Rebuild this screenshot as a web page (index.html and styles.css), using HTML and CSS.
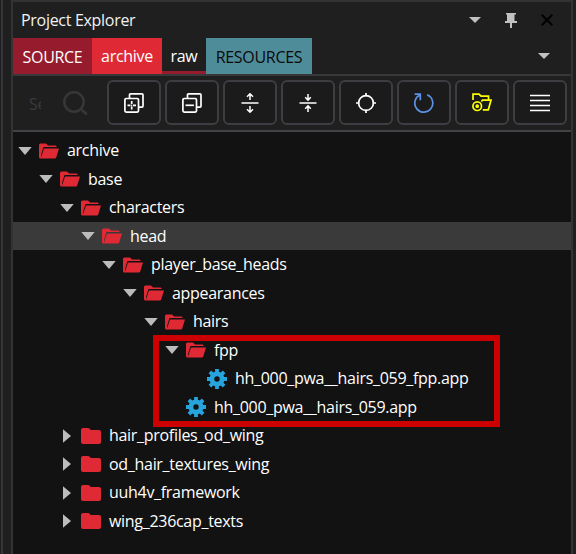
FILE: index.html
```html
<!DOCTYPE html>
<html lang="en">
<head>
<meta charset="utf-8">
<title>Project Explorer</title>
<link rel="stylesheet" href="styles.css">
</head>
<body>
<svg class="defs" width="0" height="0">
  <symbol id="down" viewBox="0 0 14 8"><path d="M.3 0h13.4L7 8z"/></symbol>
  <symbol id="right" viewBox="0 0 8 14"><path d="M0 .2v13.6L8 7z"/></symbol>
  <symbol id="open" viewBox="0 0 20 16"><path d="M0 14V2Q0 .5 1.5.5H7L9 2.5h7.5q1 0 1.2 1.5H4.5L2 12V14.5L5 5.5h15L17.3 14.3Q17 15.5 15.7 15.5H1.5Q0 15.5 0 14z"/></symbol>
  <symbol id="folder" viewBox="0 0 20 16"><path d="M0 2Q0 0 2 0H7.5L10 2H18Q20 2 20 4V14Q20 16 18 16H2Q0 16 0 14z"/></symbol>
  <symbol id="gear" viewBox="0 0 20 20"><circle cx="10" cy="10" r="5.1" fill="none" stroke="currentColor" stroke-width="4.8"/><path d="M10 0v4M10 16v4M0 10h4M16 10h4M2.9 2.9l3 3M14.1 14.1l3 3M2.9 17.1l3-3M14.1 5.9l3-3" fill="none" stroke="currentColor" stroke-width="3.8"/></symbol>
</svg>
<div class="window">
  <section class="panel">
    <header class="title"><h1>Project Explorer</h1>
      <svg class="menu" width="12" height="6"><path d="M0 0h12L6 6z"/></svg>
      <svg class="pin" width="12" height="15"><path d="M1 0h10v1.5H9.5V8H12v2H7v5H5v-5H0V8h2V1.5H1z"/></svg>
      <svg class="close" width="12" height="12"><path d="M.7.7l10.6 10.6M11.3.7L.7 11.3"/></svg>
    </header>
    <nav class="tabs">
      <span class="tab source">SOURCE</span><span class="tab active">archive</span><span class="tab raw">raw</span><span class="tab resources">RESOURCES</span>
      <svg class="more" width="12" height="6"><path d="M0 0h12L6 6z"/></svg>
    </nav>
    <div class="toolbar">
      <div class="search"><span>Search</span><svg width="25" height="25"><circle cx="11" cy="11" r="9.7" stroke-width="2.5"/><path d="M19.5 19.5l3.3 3" stroke-width="3" stroke-linecap="round"/></svg></div>
      <button><svg width="20" height="20"><path d="M5.5 5V2Q5.5.9 6.6.9H18Q19 .9 19 2v11q0 1.1-1 1.1h-3"/><rect x=".9" y="5.5" width="13.6" height="13.6" rx="1.3"/><path d="M3.5 12.3h3M9 12.3h3M7.7 8v3M7.7 13.5v3M7.2 12.3h1"/></svg></button>
      <button><svg width="20" height="20"><path d="M5.5 5V2Q5.5.9 6.6.9H18Q19 .9 19 2v11q0 1.1-1 1.1h-3"/><rect x=".9" y="5.5" width="13.6" height="13.6" rx="1.3"/><path d="M3.5 12.3h8.4"/></svg></button>
      <button><svg class="thin" width="20" height="20"><path d="M1.5 10h17M10 7V1M7 3.7L10 .8l3 2.9M10 13v6M7 16.3l3 2.9 3-2.9"/></svg></button>
      <button><svg class="thin" width="20" height="20"><path d="M1.5 10h17M10 1v6M7.2 4.3L10 7.1l2.8-2.8M10 19v-6M7.2 15.7l2.8-2.8 2.8 2.8"/></svg></button>
      <button><svg width="20" height="20"><circle cx="10" cy="10" r="7.4"/><path d="M10 0v3.3M10 16.7V20M0 10h3.3M16.7 10H20"/></svg></button>
      <button class="refresh"><svg width="20" height="20"><path d="M13.2 1.8A9 9 0 1 1 5.5 2.2M.6 1.2h5.7v6"/></svg></button>
      <button class="locate"><svg width="20" height="20"><path d="M1 7V1.2h6L9 3.2h7.5v3M10 7.2h9L16.3 16.8h-5.5M10.3 7.2l-.8 1.5"/><circle cx="5.2" cy="13.2" r="4.3"/><circle cx="5.2" cy="13.2" r="1" /></svg></button>
      <button><svg width="20" height="20"><path d="M0 2.5h20M0 7.5h20M0 12.5h20M0 17.5h20"/></svg></button>
    </div>
    <ul class="tree">
      <li><svg class="arrow"><use href="#down"/></svg><svg class="icon"><use href="#open"/></svg><span>archive</span></li>
      <li class="l1"><svg class="arrow"><use href="#down"/></svg><svg class="icon"><use href="#open"/></svg><span>base</span></li>
      <li class="l2"><svg class="arrow"><use href="#down"/></svg><svg class="icon"><use href="#open"/></svg><span>characters</span></li>
      <li class="l3 selected"><svg class="arrow"><use href="#down"/></svg><svg class="icon"><use href="#open"/></svg><span>head</span></li>
      <li class="l4"><svg class="arrow"><use href="#down"/></svg><svg class="icon"><use href="#open"/></svg><span>player_base_heads</span></li>
      <li class="l5"><svg class="arrow"><use href="#down"/></svg><svg class="icon"><use href="#open"/></svg><span>appearances</span></li>
      <li class="l6"><svg class="arrow"><use href="#down"/></svg><svg class="icon"><use href="#open"/></svg><span>hairs</span></li>
      <li class="l7"><svg class="arrow"><use href="#down"/></svg><svg class="icon"><use href="#open"/></svg><span>fpp</span></li>
      <li class="l8"><i class="arrow"></i><svg class="icon gear"><use href="#gear"/></svg><span>hh_000_pwa__hairs_059_fpp.app</span></li>
      <li class="l7"><i class="arrow"></i><svg class="icon gear"><use href="#gear"/></svg><span>hh_000_pwa__hairs_059.app</span></li>
      <li class="l2"><svg class="arrow"><use href="#right"/></svg><svg class="icon"><use href="#folder"/></svg><span>hair_profiles_od_wing</span></li>
      <li class="l2"><svg class="arrow"><use href="#right"/></svg><svg class="icon"><use href="#folder"/></svg><span>od_hair_textures_wing</span></li>
      <li class="l2"><svg class="arrow"><use href="#right"/></svg><svg class="icon"><use href="#folder"/></svg><span>uuh4v_framework</span></li>
      <li class="l2"><svg class="arrow"><use href="#right"/></svg><svg class="icon"><use href="#folder"/></svg><span>wing_236cap_texts</span></li>
    </ul>
    <div class="highlight"></div>
  </section>
</div>
</body>
</html>
```
FILE: styles.css
```css
* { box-sizing: border-box; }
body { margin: 0; background: #1f1f1f; color: #fff; font: 16px/20px "Open Sans", "Noto Sans", sans-serif; letter-spacing: -.3px; }
svg { display: block; flex: none; }
.defs { position: absolute; }
.window { height: 554px; margin-left: 1px; padding: 0 3px 0 8px; border-left: 2px solid #35353a; overflow: hidden; }
.panel { position: relative; height: 554px; border: 2px solid #333; border-bottom: 0; background: #1f1f1f; display: flex; flex-direction: column; }
.title { height: 36px; display: flex; align-items: center; padding: 0 18px 0 8px; }
.title h1 { flex: 1; margin: 0; font-size: 16px; font-weight: 400; color: #f1f1f1; }
.title svg, .more { fill: #c1c1c1; }
.menu { margin-right: 24px; }
.pin { margin-right: 24px; }
.title .close { fill: none; stroke: #000; stroke-width: 2; }
.tabs { height: 38px; display: flex; border-bottom: 2px solid #38383a; }
.tab { padding-top: 8px; text-align: center; }
.source { width: 79px; padding-top: 9px; background: #961c2d; }
.active { width: 70px; background: #df2935; }
.raw { width: 44px; border-bottom: 3px solid #961c2d; }
.resources { width: 106px; padding-top: 9px; background: #4f8c99; color: #0a0a0a; }
.more { margin: 15px 21px 0 auto; }
.toolbar { height: 56px; display: flex; gap: 4px; padding-top: 4px; border-bottom: 2px solid #414146; }
.search { width: 90px; display: flex; padding-left: 16px; color: #3a3a3c; }
.search span { width: 12px; overflow: hidden; margin: 14px 22px 0 0; height: 22px; }
.search svg { margin-top: 11px; fill: none; stroke: #373737; }
button { width: 54px; height: 45px; padding: 0; flex: none; display: flex; align-items: center; justify-content: center; background: #1b1b1b; border: 2px solid #3d3d42; border-radius: 6px; color: #fff; }
button svg { fill: none; stroke: currentColor; stroke-width: 1.7; }
button .thin { stroke-width: 1.5; }
.refresh { color: #5c91e5; }
.locate { color: #ff0; }
.tree { flex: 1; margin: 0; padding: 4.4px 0 0; list-style: none; background: #121212; }
.tree li { height: 28.53px; display: flex; align-items: center; padding-left: 5px; }
.tree li span { margin-top: -1px; }
.tree .l1 { padding-left: 26px; }
.tree .l2 { padding-left: 47px; }
.tree .l3 { padding-left: 68px; }
.tree .l4 { padding-left: 89px; }
.tree .l5 { padding-left: 110px; }
.tree .l6 { padding-left: 131px; }
.tree .l7 { padding-left: 152px; }
.tree .l8 { padding-left: 173px; }
.tree .selected { background: #3a3a3a; }
.arrow { width: 14px; height: 14px; margin-right: 7px; fill: #bcbcbc; }
.icon { width: 20px; height: 16px; margin-right: 8px; fill: #df2935; }
.gear { height: 20px; color: #27a4dd; }
.highlight { position: absolute; left: 140px; top: 333px; width: 347px; height: 92px; border: 6px solid #c00; }
```
